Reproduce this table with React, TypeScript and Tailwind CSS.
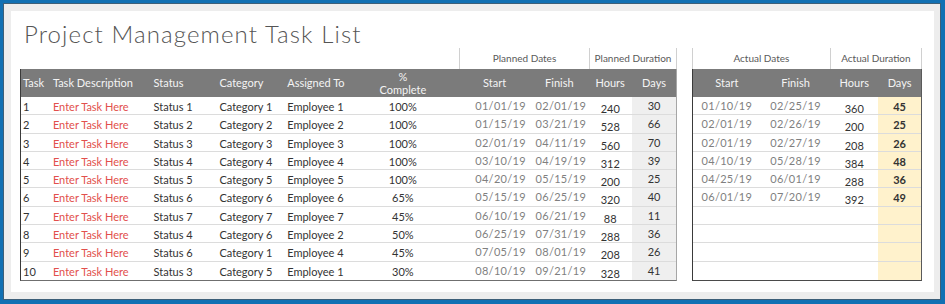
import React from 'react';

type PlannedRow = {
  task: string;
  status: string;
  category: string;
  assigned: string;
  complete: string;
  start: string;
  finish: string;
  hours: string;
  days: string;
};

const planned: PlannedRow[] = [
  { task: '1', status: 'Status 1', category: 'Category 1', assigned: 'Employee 1', complete: '100%', start: '01/01/19', finish: '02/01/19', hours: '240', days: '30' },
  { task: '2', status: 'Status 2', category: 'Category 2', assigned: 'Employee 2', complete: '100%', start: '01/15/19', finish: '03/21/19', hours: '528', days: '66' },
  { task: '3', status: 'Status 3', category: 'Category 3', assigned: 'Employee 3', complete: '100%', start: '02/01/19', finish: '04/11/19', hours: '560', days: '70' },
  { task: '4', status: 'Status 4', category: 'Category 4', assigned: 'Employee 4', complete: '100%', start: '03/10/19', finish: '04/19/19', hours: '312', days: '39' },
  { task: '5', status: 'Status 5', category: 'Category 5', assigned: 'Employee 5', complete: '100%', start: '04/20/19', finish: '05/15/19', hours: '200', days: '25' },
  { task: '6', status: 'Status 6', category: 'Category 6', assigned: 'Employee 6', complete: '65%', start: '05/15/19', finish: '06/25/19', hours: '320', days: '40' },
  { task: '7', status: 'Status 7', category: 'Category 7', assigned: 'Employee 7', complete: '45%', start: '06/10/19', finish: '06/21/19', hours: '88', days: '11' },
  { task: '8', status: 'Status 4', category: 'Category 6', assigned: 'Employee 2', complete: '50%', start: '06/25/19', finish: '07/31/19', hours: '288', days: '36' },
  { task: '9', status: 'Status 6', category: 'Category 1', assigned: 'Employee 4', complete: '45%', start: '07/05/19', finish: '08/01/19', hours: '208', days: '26' },
  { task: '10', status: 'Status 3', category: 'Category 5', assigned: 'Employee 1', complete: '30%', start: '08/10/19', finish: '09/21/19', hours: '328', days: '41' },
];

// actual values, blank rows padded below
const actual = [
  { start: '01/10/19', finish: '02/25/19', hours: '360', days: '45' },
  { start: '02/01/19', finish: '02/26/19', hours: '200', days: '25' },
  { start: '02/01/19', finish: '02/27/19', hours: '208', days: '26' },
  { start: '04/10/19', finish: '05/28/19', hours: '384', days: '48' },
  { start: '04/25/19', finish: '06/01/19', hours: '288', days: '36' },
  { start: '06/01/19', finish: '07/20/19', hours: '392', days: '49' },
  { start: '', finish: '', hours: '', days: '' },
  { start: '', finish: '', hours: '', days: '' },
  { start: '', finish: '', hours: '', days: '' },
  { start: '', finish: '', hours: '', days: '' },
];

const font = { fontFamily: 'Lato, "Open Sans", sans-serif' };

function PlannedTable() {
  return (
    <div className="w-[657px] flex flex-col">
      {/* group header */}
      <div className="flex h-[21px] text-[10px] text-[#595959]">
        <div className="w-[439px]" />
        <div className="w-[130px] border-l border-[#d0d0d0] flex items-center justify-center">Planned Dates</div>
        <div className="w-[88px] border-l border-r border-[#d0d0d0] flex items-center justify-center">Planned Duration</div>
      </div>

      <div className="border-l border-[#3a3a3a] border-r border-r-[#a6a6a6] border-b border-b-[#6f6f6f]">
        {/* column header */}
        <div className="flex h-[28px] bg-[#7b7b7b] text-[11px] text-[#f4f4f4] items-center">
          <div className="w-[30px] pl-[2px]">Task</div>
          <div className="w-[100px] pl-[2px]">Task Description</div>
          <div className="w-[67px] pl-[3px]">Status</div>
          <div className="w-[67px] pl-[2px]">Category</div>
          <div className="w-[84px] pl-[3px]">Assigned To</div>
          <div className="w-[70px] text-center leading-[13px]">
            %<br />Complete
          </div>
          <div className="w-[21px]" />
          <div className="w-[72px] text-center">Start</div>
          <div className="w-[58px] text-center">Finish</div>
          <div className="w-[44px] text-center">Hours</div>
          <div className="w-[44px] text-center">Days</div>
        </div>

        {planned.map((r) => (
          <div key={r.task} className="flex h-[18.3px] text-[11px] text-[#333333] border-b border-[#dcdcdc] last:border-b-0">
            <div className="w-[30px] pl-[2px] pt-[2px]">{r.task}</div>
            <div className="w-[100px] pl-[2px] pt-[2px] text-[#e2504c]">Enter Task Here</div>
            <div className="w-[67px] pl-[3px] pt-[2px]">{r.status}</div>
            <div className="w-[67px] pl-[2px] pt-[2px]">{r.category}</div>
            <div className="w-[84px] pl-[3px] pt-[2px]">{r.assigned}</div>
            <div className="w-[70px] text-center pt-[2px]">{r.complete}</div>
            <div className="w-[21px]" />
            <div className="w-[72px] text-center pl-[12px] pt-[1px] text-[#7f7f7f] tracking-[0.3px]">{r.start}</div>
            <div className="w-[58px] text-center pl-[3px] pt-[1px] text-[#7f7f7f] tracking-[0.3px]">{r.finish}</div>
            <div className="w-[44px] text-center pt-[4px]">{r.hours}</div>
            <div className="w-[44px] text-center pt-[1px] bg-[#efefef]">{r.days}</div>
          </div>
        ))}
      </div>
    </div>
  );
}

function ActualTable() {
  return (
    <div className="w-[230px] flex flex-col">
      <div className="flex h-[21px] text-[10px] text-[#595959] border-l border-r border-[#d0d0d0]">
        <div className="w-[138px] flex items-center justify-center">Actual Dates</div>
        <div className="w-[92px] border-l border-[#d0d0d0] flex items-center justify-center">Actual Duration</div>
      </div>

      <div className="border-l border-[#3a3a3a] border-r border-b border-r-[#5a5a5a] border-b-[#4a4a4a]">
        <div className="flex h-[28px] bg-[#7b7b7b] text-[11px] text-[#f4f4f4] items-center">
          <div className="w-[68px] text-center">Start</div>
          <div className="w-[70px] text-center">Finish</div>
          <div className="w-[48px] text-center">Hours</div>
          <div className="w-[43px] text-center">Days</div>
        </div>

        {actual.map((r, i) => (
          <div key={i} className="flex h-[18.3px] text-[11px] text-[#333333] border-b border-[#dcdcdc] last:border-b-0">
            <div className="w-[68px] text-center pt-[1px] text-[#7f7f7f] tracking-[0.3px]">{r.start}</div>
            <div className="w-[70px] text-center pt-[1px] text-[#7f7f7f] tracking-[0.3px]">{r.finish}</div>
            <div className="w-[48px] text-center pt-[4px]">{r.hours}</div>
            <div className="w-[43px] text-center pt-[2px] font-bold bg-[#fff2cc]">{r.days}</div>
          </div>
        ))}
      </div>
    </div>
  );
}

export default function App() {
  return (
    <div className="w-[945px] h-[304px] bg-[#1170b3] pt-[3px] pl-[3px] pr-[4px] pb-[4px]" style={font}>
      <div className="h-full bg-[#ededed] border border-[#3d5f78] pt-[7px] pl-[7px] pr-[6px] pb-[7px]">
        <div className="h-full bg-white flex flex-col px-[9px]">
          <div className="h-[37px] pl-[4px] pt-[10px]">
            <h1 className="text-[24px] leading-[26px] tracking-[1.1px] font-light text-[#555555]">Project Management Task List</h1>
          </div>
          <div className="flex gap-[15px]">
            <PlannedTable />
            <ActualTable />
          </div>
        </div>
      </div>
    </div>
  );
}
